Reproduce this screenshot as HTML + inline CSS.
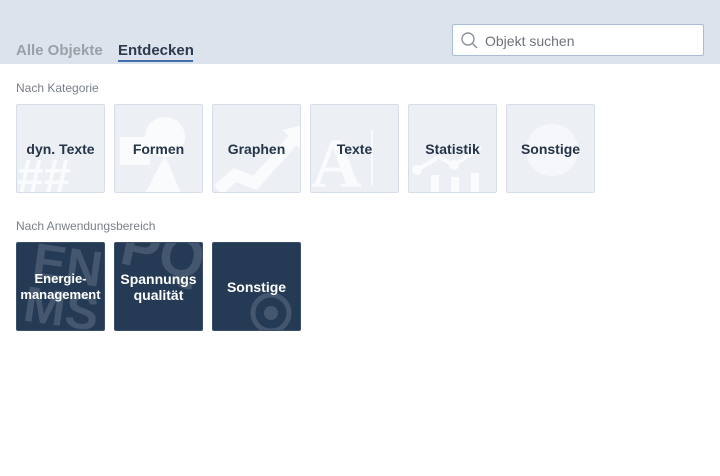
<!DOCTYPE html>
<html><head><meta charset="utf-8"><style>
*{margin:0;padding:0;box-sizing:border-box}
body{width:720px;height:476px;background:#fff;font-family:"Liberation Sans",sans-serif;position:relative;overflow:hidden}
.hdr{position:absolute;left:0;top:0;width:720px;height:64px;background:#dce3ed}
.tab{position:absolute;top:42px;font-size:16px}
.t1{left:16px;color:#9aa0a8;font-weight:bold;font-size:15px}
.t2{left:118px;color:#2c3a4d;font-weight:bold;font-size:15px}
.ul{position:absolute;left:118px;top:60px;width:75px;height:2px;background:#3f6ea8}
.search{position:absolute;left:452px;top:24px;width:252px;height:32px;background:#fff;border:1px solid #a9bcd3;border-radius:2px}
.search span{position:absolute;left:32px;top:8px;font-size:14px;color:#6d737b}
.lbl{position:absolute;left:16px;font-size:12px;color:#7a8089}
.tile{position:absolute;width:89px;height:89px;border:1px solid #d6dee9;border-radius:2px;background:#ecf0f5;overflow:hidden;display:flex;align-items:center;justify-content:center;text-align:center;font-weight:bold;font-size:14px;color:#253447}
.tile span{position:relative;z-index:1;line-height:16px}
.tile svg{position:absolute;left:0;top:0}
.dk{background:#253a55;border-color:#3a4e68;color:#fff;font-size:13px}
.big{position:absolute;font-weight:bold;color:rgba(255,255,255,0.15);font-size:50px;line-height:44px;z-index:0}
</style></head><body>
<div class="hdr"></div>
<div class="tab t1">Alle Objekte</div>
<div class="tab t2">Entdecken</div>
<div class="ul"></div>
<div class="search"><svg width="20" height="20" style="position:absolute;left:7px;top:6px"><circle cx="8" cy="8" r="6" fill="none" stroke="#8a929c" stroke-width="1.4"/><line x1="12.5" y1="12.5" x2="17" y2="17" stroke="#8a929c" stroke-width="1.4"/></svg><span>Objekt suchen</span></div>
<div class="lbl" style="top:81px">Nach Kategorie</div>
<div class="tile" style="left:16px;top:104px"><svg width="89" height="89"><text x="0" y="88" font-size="48" font-weight="bold" fill="#fafbfd" font-family="Liberation Sans">##</text></svg><span>dyn. Texte</span></div>
<div class="tile" style="left:114px;top:104px"><svg width="89" height="89"><circle cx="50" cy="32" r="20" fill="#fafbfd"/><rect x="5" y="32" width="30" height="28" fill="#fafbfd"/><polygon points="30,89 50,50 66,89" fill="#fafbfd"/></svg><span>Formen</span></div>
<div class="tile" style="left:212px;top:104px"><svg width="89" height="89"><polyline points="5,85 22,70 42,78 80,35" fill="none" stroke="#fafbfd" stroke-width="12"/><polygon points="70,25 90,20 88,45" fill="#fafbfd"/></svg><span>Graphen</span></div>
<div class="tile" style="left:310px;top:104px"><svg width="89" height="89"><text x="0" y="82" font-size="70" font-family="Liberation Serif" fill="#fafbfd">A</text><rect x="60" y="25" width="2" height="55" fill="#fafbfd"/></svg><span>Texte</span></div>
<div class="tile" style="left:408px;top:104px"><svg width="89" height="89"><polyline points="8,65 30,52 45,60 72,42" fill="none" stroke="#fafbfd" stroke-width="4"/><circle cx="8" cy="65" r="5" fill="#fafbfd"/><circle cx="45" cy="60" r="5" fill="#fafbfd"/><rect x="22" y="70" width="8" height="19" fill="#fafbfd"/><rect x="42" y="72" width="8" height="17" fill="#fafbfd"/><rect x="62" y="68" width="8" height="21" fill="#fafbfd"/></svg><span>Statistik</span></div>
<div class="tile" style="left:506px;top:104px"><svg width="89" height="89"><circle cx="45" cy="45" r="26" fill="#f5f7fa"/></svg><span>Sonstige</span></div>
<div class="lbl" style="top:219px">Nach Anwendungsbereich</div>
<div class="tile dk" style="left:16px;top:242px"><div class="big" style="left:10px;top:0px;transform:rotate(8deg)">EN<br>MS</div><span>Energie-<br>management</span></div>
<div class="tile dk" style="left:114px;top:242px"><div class="big" style="left:6px;top:-12px;font-size:58px;transform:rotate(12deg)">PQ</div><span style="font-size:14px">Spannungs<br>qualität</span></div>
<div class="tile dk" style="left:212px;top:242px"><svg width="89" height="89"><circle cx="58" cy="70" r="18" fill="none" stroke="rgba(255,255,255,0.15)" stroke-width="5"/><circle cx="58" cy="70" r="7" fill="rgba(255,255,255,0.15)"/></svg><span style="font-size:14px">Sonstige</span></div>
</body></html>
